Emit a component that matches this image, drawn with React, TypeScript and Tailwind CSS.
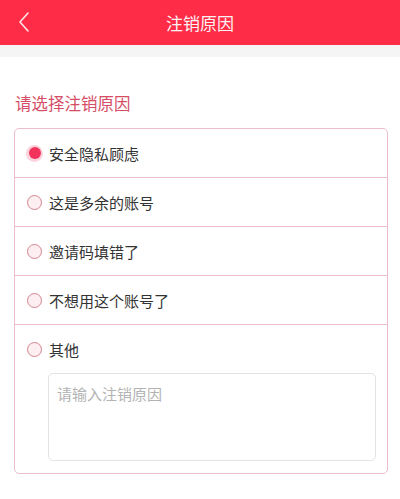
import { useState } from "react";

const REASONS = ["安全隐私顾虑", "这是多余的账号", "邀请码填错了", "不想用这个账号了", "其他"];

function Radio({ checked }: { checked: boolean }) {
  return checked ? (
    <span className="flex h-[17px] w-[17px] shrink-0 items-center justify-center rounded-full bg-[#fbd3dc]">
      <span className="h-[12px] w-[12px] rounded-full bg-[#f2335c]" />
    </span>
  ) : (
    <span className="flex h-[17px] w-[17px] shrink-0 items-center justify-center">
      <span className="h-[15px] w-[15px] rounded-full border-[1.5px] border-[#d4838f] bg-[#fdeef1]" />
    </span>
  );
}

export default function App() {
  const [selected, setSelected] = useState(0);

  return (
    <div
      className="min-h-[499px] w-[400px] bg-white"
      style={{ fontFamily: '"Noto Sans CJK SC", "Noto Sans", sans-serif' }}
    >
      {/* 顶部导航 */}
      <header className="relative flex h-[45px] items-center justify-center bg-[#fe2c46]">
        <button type="button" className="absolute left-[16px] top-[10px] text-[#ffe4e8]">
          <svg width="16" height="24" viewBox="0 0 16 24" fill="none">
            <path d="M12 3 L4 12 L12 21" stroke="currentColor" strokeWidth="1.6" strokeLinecap="round" strokeLinejoin="round" />
          </svg>
        </button>
        <h1 className="text-[17px] leading-none text-[#fff1f3]">注销原因</h1>
      </header>
      <div className="h-[12px] bg-[#f5f5f5]" />

      <div className="px-[14px] pt-[35px]">
        <p className="pl-[1px] text-[16.5px] leading-[22px] text-[#d64e66]">请选择注销原因</p>

        <div className="mt-[14px] w-[374px] rounded-[5px] border border-[#ebbdc8]">
          {REASONS.map((reason, idx) => {
            const isLast = idx === REASONS.length - 1;
            return (
              <div key={reason} className={isLast ? "" : "border-b border-[#ebbdc8]"}>
                <button
                  type="button"
                  onClick={() => setSelected(idx)}
                  className="flex h-[48px] w-full items-center gap-[6px] pl-[11px] text-left"
                >
                  <Radio checked={selected === idx} />
                  <span className="text-[15px] leading-none text-[#333333]">{reason}</span>
                </button>
                {isLast ? (
                  <div className="pb-[12px] pl-[33px] pr-[11px]">
                    <textarea
                      placeholder="请输入注销原因"
                      className="block h-[88px] w-full resize-none rounded-[5px] border border-[#e3e3e3] px-[8px] py-[10px] text-[15px] leading-[20px] text-[#333] placeholder:text-[#b3b3b3] focus:outline-none"
                    />
                  </div>
                ) : null}
              </div>
            );
          })}
        </div>
      </div>
    </div>
  );
}
